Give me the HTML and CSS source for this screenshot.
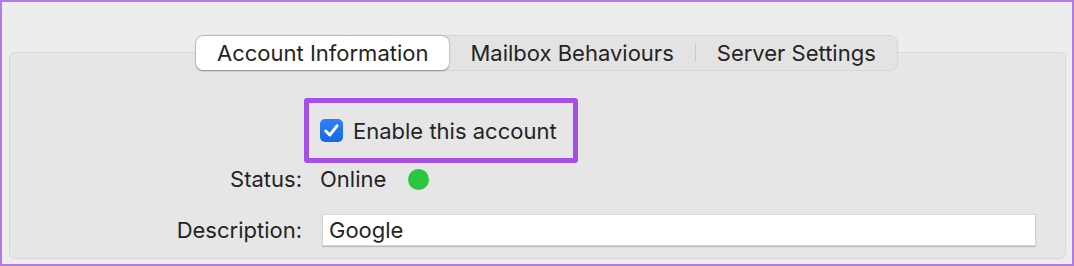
FILE: index.html
```html
<!DOCTYPE html>
<html>
<head>
<meta charset="utf-8">
<link rel="stylesheet" href="styles.css">
</head>
<body>
<div class="frame">
  <div class="tabs">
    <div class="tab selected">Account Information</div>
    <div class="tab">Mailbox Behaviours</div>
    <div class="sep"></div>
    <div class="tab">Server Settings</div>
  </div>
  <div class="panel">
    <div class="form">
      <div class="label"></div>
      <div class="value">
        <div class="highlight">
          <span class="checkbox">
            <svg width="23" height="23" viewBox="0 0 23 23"><path d="M5.8 12 L9.8 16 L17 6.8" fill="none" stroke="#fff" stroke-width="3" stroke-linecap="round" stroke-linejoin="round"/></svg>
          </span>
          <span class="check-text">Enable this account</span>
        </div>
      </div>
      <div class="label status-row">Status:</div>
      <div class="value status-row"><span>Online</span><span class="dot"></span></div>
      <div class="label desc-row">Description:</div>
      <div class="value desc-row"><div class="input">Google</div></div>
    </div>
  </div>
</div>
</body>
</html>
```
FILE: styles.css
```css
* { box-sizing: border-box; }
html, body { margin: 0; padding: 0; }
body {
  width: 1074px;
  height: 266px;
  font-family: "Inter", "Noto Sans", sans-serif;
  color: #242424;
  background: #ececec;
}
.frame {
  width: 1074px;
  height: 266px;
  border: 2px solid #b47be6;
  background: #ededed;
  padding: 0 6px 5px 7px;
  display: flex;
  flex-direction: column;
}
.tabs {
  position: relative;
  z-index: 1;
  align-self: flex-start;
  margin-top: 33px;
  margin-left: 186px;
  height: 36px;
  display: flex;
  align-items: center;
  background: #e3e3e3;
  border: 1px solid #d6d6d6;
  border-radius: 8px;
  font-size: 22px;
}
.tab {
  height: 34px;
  display: flex;
  align-items: center;
  padding: 0 21px;
  line-height: 1;
  white-space: nowrap;
}
.tab.selected {
  background: #fff;
  border-radius: 7px;
  box-shadow: 0 0.5px 2px rgba(0,0,0,0.35), 0 0 0 0.5px rgba(0,0,0,0.08);
}
.sep {
  width: 1px;
  height: 18px;
  background: #c9c9c9;
}
.panel {
  flex: 1;
  margin-top: -19px;
  background: #e6e6e6;
  border: 1px solid #d8d8d8;
  border-radius: 6px;
  padding: 45px 29px 0 0;
}
.form {
  display: grid;
  grid-template-columns: 292px 1fr;
  column-gap: 18px;
  font-size: 22px;
}
.label {
  text-align: right;
  display: flex;
  align-items: center;
  justify-content: flex-end;
}
.value {
  display: flex;
  align-items: center;
}
.highlight {
  margin-left: -16px;
  height: 65px;
  border: 5px solid #a54fe8;
  border-radius: 3px;
  padding: 0 16px 0 11px;
  display: flex;
  align-items: center;
}
.checkbox {
  width: 23px;
  height: 23px;
  border-radius: 5px;
  background: linear-gradient(#2f80f7, #1766e3);
  display: flex;
  align-items: center;
  justify-content: center;
  margin-right: 10px;
}
.checkbox svg { display: block; }
.status-row { height: 32px; }
.dot {
  width: 21px;
  height: 21px;
  border-radius: 50%;
  background: #2ac640;
  margin-left: 22px;
}
.desc-row { height: 32px; margin-top: 19px; }
.input {
  margin-left: 2px;
  flex: 1;
  height: 32px;
  background: #fff;
  border: 1px solid #d4d4d4;
  border-top-color: #dadada;
  box-shadow: 0 1px 1px rgba(0,0,0,0.18);
  padding-left: 6px;
  display: flex;
  align-items: center;
}
```
